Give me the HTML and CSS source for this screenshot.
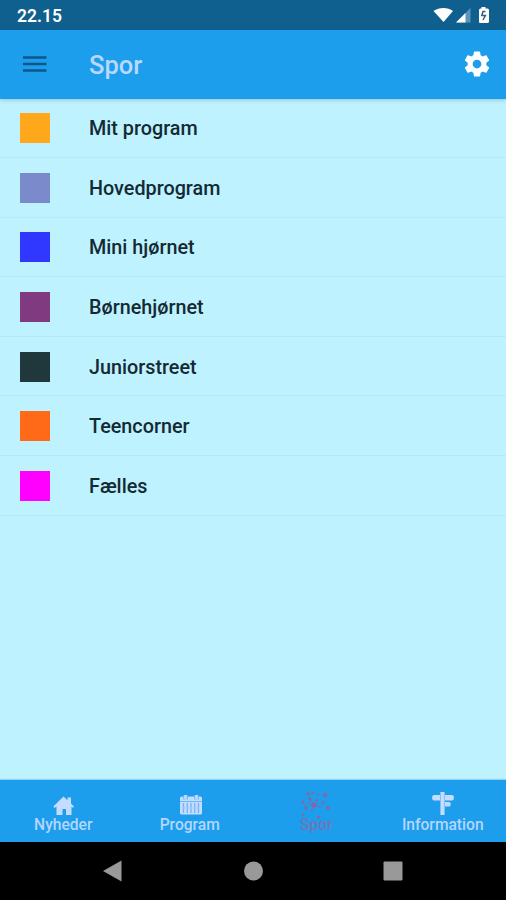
FILE: index.html
```html
<!DOCTYPE html>
<html lang="da">
<head>
  <meta charset="utf-8">
  <title>Spor</title>
  <link rel="stylesheet" href="styles.css">
</head>
<body>
  <div class="status-bar">
    <span class="clock">22.15</span>
    <svg class="status-icons" width="60" height="20" viewBox="0 0 60 20">
      <path d="M.5 5C6 1 15 1 20 5L10.500 16z" fill="#fff"/>
      <path d="M37.500 2v14.500H23z" fill="#5d93b8"/>
      <path d="M32.500 7v9.500H23z" fill="#fff"/>
      <path d="M48.500 2.500V1h4v1.500h2q1.500 0 1.500 1.500v11.500q0 1.500-1.500 1.500h-7.500Q46 17 46 15.500V4q0-1.500 1.500-1.500z" fill="#fff"/>
      <path d="M52.500 5.500h-2.500l-1.200 4h3.600l-2.400 4.500" fill="none" stroke="#34607c" stroke-width="1.500"/>
    </svg>
  </div>

  <header class="toolbar">
    <button class="icon-button" aria-label="Menu">
      <svg width="24" height="18" viewBox="0 0 24 18">
        <path d="M0 2.500h23.500M0 9h23.500M0 15.500h23.500" stroke="#0d5788" stroke-width="2.600"/>
      </svg>
    </button>
    <h1>Spor</h1>
    <button class="icon-button" aria-label="Indstillinger">
      <svg width="30" height="30" viewBox="0 0 24 24">
        <path fill="#fff" d="M19.430 12.980c.04-.32.07-.64.07-.98s-.03-.66-.07-.98l2.110-1.650c.19-.15.24-.42.12-.64l-2-3.460c-.12-.22-.39-.3-.61-.22l-2.490 1c-.52-.4-1.080-.73-1.690-.98l-.38-2.650C14.460 2.180 14.250 2 14 2h-4c-.25 0-.46.18-.49.42l-.38 2.650c-.61.25-1.170.59-1.690.98l-2.490-1c-.23-.09-.49 0-.61.22l-2 3.460c-.13.22-.07.49.12.64l2.110 1.650c-.04.32-.07.65-.07.98s.03.66.07.98l-2.110 1.650c-.19.15-.24.42-.12.64l2 3.460c.12.22.39.3.61.22l2.490-1c.52.4 1.080.73 1.690.98l.38 2.650c.03.24.24.42.49.42h4c.25 0 .46-.18.49-.42l.38-2.650c.61-.25 1.170-.59 1.690-.98l2.490 1c.23.09.49 0 .61-.22l2-3.460c.12-.22.07-.49-.12-.64l-2.110-1.650zM12 15.500c-1.930 0-3.500-1.570-3.500-3.500s1.570-3.500 3.500-3.500 3.500 1.570 3.500 3.500-1.570 3.500-3.500 3.500z"/>
      </svg>
    </button>
  </header>

  <ul class="track-list">
    <li><span class="swatch orange"></span><span class="name">Mit program</span></li>
    <li><span class="swatch lavender"></span><span class="name">Hovedprogram</span></li>
    <li><span class="swatch blue"></span><span class="name">Mini hjørnet</span></li>
    <li><span class="swatch purple"></span><span class="name">Børnehjørnet</span></li>
    <li><span class="swatch dark"></span><span class="name">Juniorstreet</span></li>
    <li><span class="swatch red"></span><span class="name">Teencorner</span></li>
    <li><span class="swatch magenta"></span><span class="name">Fælles</span></li>
  </ul>

  <nav class="tabs">
    <a class="tab">
      <svg width="22" height="24" viewBox="0 0 22 24">
        <path d="M1.300 14.500L11.500 4.500l4 3.700V5.500h3.500v6l3 3-1.200 1.300-1.300-1V23H14v-6h-3.500v6H4.500v-8.500l-2 1.500z" fill="#c3dcff"/>
      </svg>
      <span>Nyheder</span>
    </a>
    <a class="tab">
      <svg class="calendar" width="24" height="24" viewBox="0 0 24 24">
        <rect x="1" y="4.500" width="22" height="18" rx="1.500" fill="#c3dcff"/>
        <path d="M1 9.500h22" stroke="#6db7f5" stroke-width="1"/>
        <path d="M4.500 11v10M8.300 11v10M12 11v10M15.700 11v10M19.500 11v10" stroke="#6db7f5" stroke-width="1.300"/>
        <path d="M3 16h18" stroke="#a5cffb" stroke-width="1"/>
        <path d="M6.500 3v4.500M17.500 3v4.500" stroke="#5caff3" stroke-width="4.400"/>
        <path d="M6.500 3v4.500M17.500 3v4.500" stroke="#c3dcff" stroke-width="2.600"/>
      </svg>
      <span>Program</span>
    </a>
    <a class="tab active">
      <svg class="burst" width="32" height="30" viewBox="0 0 32 30">
        <g fill="#8b64a5">
          <circle cx="8" cy="4" r="1.800"/><circle cx="13" cy="3" r="1.300"/><circle cx="18" cy="4.500" r="1"/>
          <circle cx="25" cy="5" r="2.200"/><circle cx="10" cy="9" r="1.600"/><circle cx="17" cy="10" r="1.300"/>
          <circle cx="3" cy="12" r="1.400"/><circle cx="9" cy="13" r="1"/><circle cx="14" cy="15" r="2.700"/>
          <circle cx="23" cy="12.500" r="1.400"/><circle cx="6" cy="18" r="1.800"/><circle cx="20" cy="17" r="1"/>
          <circle cx="28" cy="18" r="1.900"/><circle cx="12" cy="20" r="1"/><circle cx="3" cy="25" r="1.300"/>
          <circle cx="18.500" cy="27" r="1.500"/>
        </g>
        <path d="M8 4l3 1M10 9l4 6 3-5M14 15l6 2M14 15l-2 5M3 12l3 6" stroke="#8b64a5" stroke-width=".6" fill="none"/>
      </svg>
      <span>Spor</span>
    </a>
    <a class="tab">
      <svg width="24" height="24" viewBox="0 0 24 24">
        <path d="M3 3h18q2 0 2 2.500T21 8.500H3Q1 8 1 5.500T3 3zM12 10h6q1.800 0 1.800 2.200T18 14.500h-6z" fill="#c3dcff"/>
        <path d="M11.500 0V23" stroke="#6bb5f5" stroke-width="5"/>
        <path d="M11.500 0V23" stroke="#c3dcff" stroke-width="3.500"/>
      </svg>
      <span>Information</span>
    </a>
  </nav>

  <div class="system-nav">
    <svg width="20" height="22" viewBox="0 0 20 22"><path d="M0 11L18.500 .5v21z" fill="#999"/></svg>
    <svg width="20" height="20" viewBox="0 0 20 20"><circle cx="10.500" cy="10" r="9.500" fill="#999"/></svg>
    <svg width="20" height="20" viewBox="0 0 20 20"><rect x=".5" y=".5" width="19" height="19" rx="1" fill="#999"/></svg>
  </div>
</body>
</html>
```
FILE: styles.css
```css
* {
  box-sizing: border-box;
}

body {
  margin: 0;
  height: 900px;
  display: flex;
  flex-direction: column;
  overflow: hidden;
  background-color: #bff2ff;
  font-family: Roboto, sans-serif;
}

.status-bar {
  display: flex;
  justify-content: space-between;
  height: 30px;
  padding: 6px 13px 0 17px;
  background-color: #10608f;
}

.clock {
  color: #fff;
  font-size: 17.5px;
  font-weight: 600;
  line-height: 20px;
}

.toolbar {
  display: flex;
  align-items: center;
  height: 68.5px;
  padding: 0 14px 0 23px;
  background-color: #1c9eed;
  box-shadow: 0 1px 4px rgba(0, 60, 90, 0.25);
}

.toolbar h1 {
  flex: 1;
  margin: 2px 0 0 42px;
  color: #b9d8ff;
  font-size: 25.5px;
  font-weight: 500;
}

.icon-button {
  display: flex;
  padding: 0;
  border: none;
  background: none;
}

.track-list {
  flex: 1;
  margin: 0;
  padding: 0;
  list-style: none;
}

.track-list li {
  display: flex;
  align-items: center;
  height: 59.6px;
  padding: 1px 20px 0;
  border-bottom: 1px solid #b6e9f8;
  color: #142a33;
  font-size: 19.8px;
  font-weight: 500;
  line-height: 26px;
}

.name {
  padding-top: 2px;
}

.swatch {
  width: 30px;
  height: 30px;
  margin-right: 39px;
}

.orange { background-color: #ffa81c; }
.lavender { background-color: #7b8aca; }
.blue { background-color: #3038ff; }
.purple { background-color: #803b80; }
.dark { background-color: #20383c; }
.red { background-color: #ff6a18; }
.magenta { background-color: #ff00ff; }

.tabs {
  display: flex;
  height: 62px;
  background-color: #1c9eed;
  box-shadow: 0 -1px 1px #8fd3f4;
}

.tab {
  flex: 1;
  display: flex;
  flex-direction: column;
  align-items: center;
  padding-top: 12px;
  color: #b4d6ff;
  font-size: 15.6px;
  font-weight: 500;
  line-height: 18px;
}

.tab.active {
  color: #6f76b8;
}

.calendar {
  margin-left: 2px;
}

.burst {
  margin: -2px 0 -4px;
}

.system-nav {
  display: flex;
  align-items: center;
  justify-content: space-between;
  height: 58px;
  padding: 0 103px;
  background-color: #000;
}
```
